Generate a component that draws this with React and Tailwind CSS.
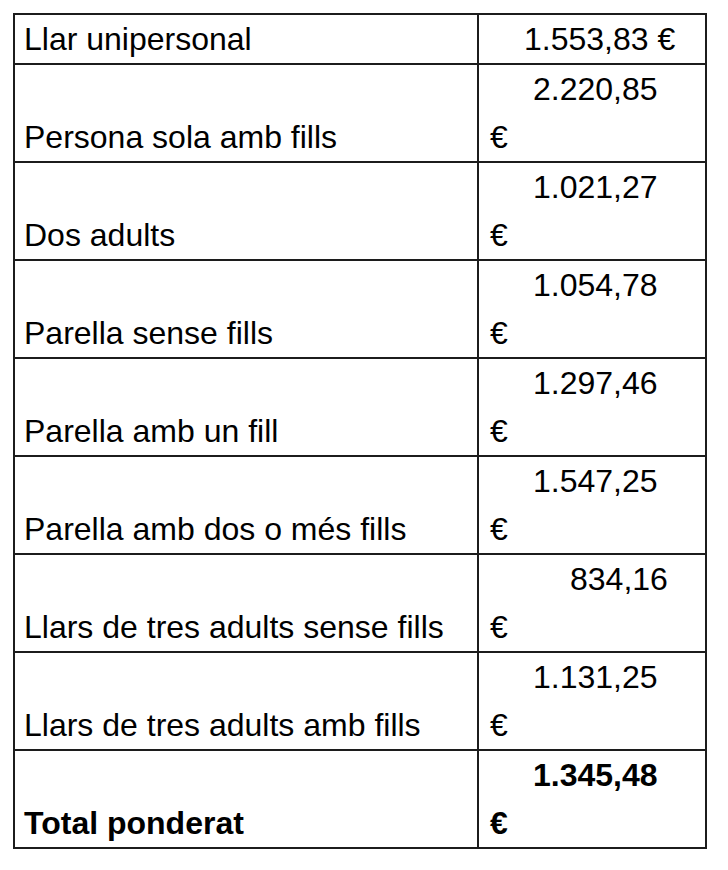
import React from "react";

const rows = [
  { label: "Persona sola amb fills", value: "2.220,85", indent: "pl-[43px]" },
  { label: "Dos adults", value: "1.021,27", indent: "pl-[43px]" },
  { label: "Parella sense fills", value: "1.054,78", indent: "pl-[43px]" },
  { label: "Parella amb un fill", value: "1.297,46", indent: "pl-[43px]" },
  { label: "Parella amb dos o més fills", value: "1.547,25", indent: "pl-[43px]" },
  { label: "Llars de tres adults sense fills", value: "834,16", indent: "pl-[80px]" },
  { label: "Llars de tres adults amb fills", value: "1.131,25", indent: "pl-[43px]" },
];

const cell = "border-2 border-[#1c1c1c] px-[9px] align-bottom";
const valueCell = "border-2 border-[#1c1c1c] pl-[11px] pr-[9px] align-bottom";

const App = () => {
  return (
    <div className="p-[13px] bg-white min-h-screen">
      <table
        className="border-collapse w-[694px] text-[32px] leading-[48px] text-black"
        style={{ fontFamily: '"Liberation Sans", Arial, sans-serif' }}
      >
        <tbody>
          <tr>
            <td className={`${cell} w-[464px]`}>Llar unipersonal</td>
            <td className={valueCell}>
              <div className="pl-[34px]">1.553,83 €</div>
            </td>
          </tr>
          {rows.map((row) => (
            <tr key={row.label}>
              <td className={cell}>{row.label}</td>
              <td className={valueCell}>
                <div className={row.indent}>{row.value}</div>
                <div>€</div>
              </td>
            </tr>
          ))}
          <tr className="font-bold">
            <td className={cell}>Total ponderat</td>
            <td className={valueCell}>
              <div className="pl-[43px]">1.345,48</div>
              <div>€</div>
            </td>
          </tr>
        </tbody>
      </table>
    </div>
  );
};

export default App;
